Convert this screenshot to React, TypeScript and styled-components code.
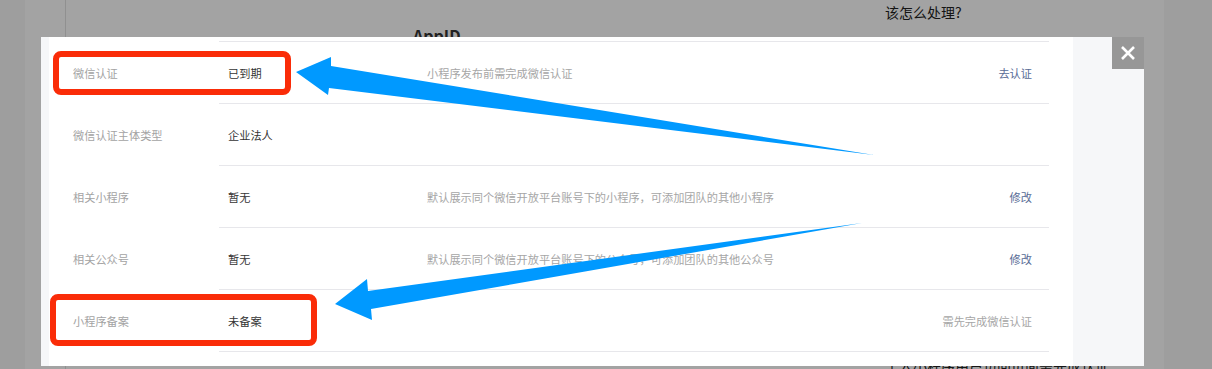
import styled, { createGlobalStyle } from 'styled-components'

type Item = {
  label: string
  value: string
  desc?: string
  action?: string
  muted?: boolean
}

const items: Item[] = [
  { label: '微信认证', value: '已到期', desc: '小程序发布前需完成微信认证', action: '去认证' },
  { label: '微信认证主体类型', value: '企业法人' },
  {
    label: '相关小程序',
    value: '暂无',
    desc: '默认展示同个微信开放平台账号下的小程序，可添加团队的其他小程序',
    action: '修改',
  },
  {
    label: '相关公众号',
    value: '暂无',
    desc: '默认展示同个微信开放平台账号下的公众号，可添加团队的其他公众号',
    action: '修改',
  },
  { label: '小程序备案', value: '未备案', action: '需先完成微信认证', muted: true },
]

const App = () => {
  return (
    <>
      <GlobalStyle />
      <Page>
        <SideNav />
        <MainCard>
          <CardTitle>AppID</CardTitle>
        </MainCard>
        <Help>
          <Question>该怎么处理?</Question>
          <HelpDivider />
          <Answer>个人小程序用户访问页面需完成认证</Answer>
        </Help>
      </Page>

      <Mask />

      <Modal>
        <Panel>
          {items.map(item => (
            <Row key={item.label}>
              <Label>{item.label}</Label>
              <Cell>
                <Value>{item.value}</Value>
                <Desc>{item.desc}</Desc>
                {item.action && <Action $muted={item.muted}>{item.action}</Action>}
              </Cell>
            </Row>
          ))}
        </Panel>
        <CloseBtn aria-label="关闭">
          <svg width="14" height="14" viewBox="0 0 14 14">
            <path d="M1 1L13 13M13 1L1 13" stroke="#fff" strokeWidth="2.6" />
          </svg>
        </CloseBtn>
      </Modal>

      {/* screenshot markup: red boxes + blue arrows */}
      <Marks width="1212" height="369" viewBox="0 0 1212 369">
        <rect x="56" y="54" width="232" height="38" rx="5" fill="none" stroke="#fa2c08" strokeWidth="6" />
        <rect x="53" y="297" width="261" height="46" rx="5" fill="none" stroke="#fa2c08" strokeWidth="6" />
        <polygon points="296,72 331,57 331,66 874,155 329,88 328,95" fill="#0099ff" />
        <polygon points="335,304 367,279 368,291 862,223 371,309 372,320" fill="#0099ff" />
      </Marks>
    </>
  )
}

export default App

const GlobalStyle = createGlobalStyle`
  html, body {
    margin: 0;
    padding: 0;
  }
  body {
    font-family: "Noto Sans CJK SC", "Noto Sans", sans-serif;
    background: #f7f7f7;
    overflow: hidden;
  }
`

const Page = styled.div`
  display: flex;
  height: 369px;
  overflow: hidden;
`
const SideNav = styled.div`
  width: 25px;
  flex: none;
  background: #f8f8f8;
`
const MainCard = styled.div`
  width: 739px;
  flex: none;
  margin-left: 40px;
  background: #fff;
  border-left: 1px solid #e2e2e2;
  border-right: 1px solid #e2e2e2;
  box-shadow: -40px 0 0 #fff;
  padding: 24px 0 0 347px;
  box-sizing: border-box;
`
const CardTitle = styled.div`
  font-size: 16px;
  font-weight: 700;
  line-height: 22px;
  color: #353535;
`
const Help = styled.div`
  width: 300px;
  flex: none;
  margin-left: 60px;
  background: #fff;
  padding: 2px 21px 0;
  box-sizing: border-box;
  display: flex;
  flex-direction: column;
  color: #222;
  font-size: 14px;
  box-shadow: -61px 0 0 #fff;
`
const Question = styled.div`
  line-height: 20px;
`
const HelpDivider = styled.div`
  height: 16px;
  margin: 141px -21px 0;
  background: #fafafa;
`
const Answer = styled.div`
  line-height: 20px;
  margin-top: 192px;
  white-space: nowrap;
`

const Mask = styled.div`
  position: fixed;
  inset: 0;
  background: rgba(0, 0, 0, 0.36);
`

const Modal = styled.div`
  position: fixed;
  left: 41px;
  top: 37px;
  width: 1103px;
  height: 329px;
  background: #f6f7f9;
  padding-left: 8px;
  box-sizing: border-box;
  display: flex;
`
const Panel = styled.div`
  width: 1024px;
  height: 100%;
  background: #fff;
  padding: 4px 24px 0;
  box-sizing: border-box;
  overflow: hidden;
  font-size: 11.2px;
`
const Row = styled.div`
  display: flex;

  &:first-child > div:last-child {
    border-top: 1px solid #e7e7eb;
  }
`
const Label = styled.div`
  width: 146px;
  flex: none;
  display: flex;
  align-items: center;
  color: #a3a3a3;
`
const Cell = styled.div`
  flex: 1;
  height: 61px;
  display: flex;
  align-items: center;
  padding: 0 17px 0 9px;
  border-bottom: 1px solid #e7e7eb;
`
const Value = styled.div`
  width: 199px;
  flex: none;
  color: #353535;
`
const Desc = styled.div`
  flex: 1;
  color: #a6a6a6;
`
const Action = styled.a<{ $muted?: boolean }>`
  color: ${p => (p.$muted ? '#a6a6a6' : '#576b95')};
  cursor: pointer;
`
const CloseBtn = styled.button`
  position: absolute;
  top: 0;
  right: 0;
  width: 32px;
  height: 32px;
  border: 0;
  padding: 0;
  background: #979797;
  display: flex;
  align-items: center;
  justify-content: center;
  cursor: pointer;
`

const Marks = styled.svg`
  position: fixed;
  left: 0;
  top: 0;
  pointer-events: none;
`
